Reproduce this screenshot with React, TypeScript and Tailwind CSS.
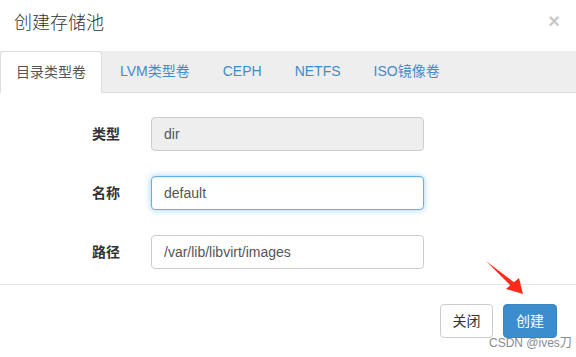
import React, { useState } from 'react';

const tabs = ['目录类型卷', 'LVM类型卷', 'CEPH', 'NETFS', 'ISO镜像卷'];

const App = () => {
  const [active, setActive] = useState(0);
  const [name, setName] = useState('default');
  const [path, setPath] = useState('/var/lib/libvirt/images');

  return (
    <div
      className="relative w-[576px] h-[357px] bg-white text-[#333] overflow-hidden"
      style={{ fontFamily: '"Liberation Sans", "Noto Sans CJK SC", sans-serif' }}
    >
      {/* header */}
      <div className="flex items-center justify-between h-[51px] pl-[14px] pr-[16px]">
        <h4 className="text-[18px] font-light text-[#333] leading-none -mt-[6px]">创建存储池</h4>
        <button className="text-[20px] font-bold text-[#c8c8c8] leading-none -mt-[10px]">×</button>
      </div>

      {/* tabs */}
      <div className="flex h-[42px] bg-[#eeeeee] border-b border-[#dddddd]">
        {tabs.map((t, i) => (
          <button
            key={t}
            onClick={() => setActive(i)}
            className={
              i === active
                ? 'px-[15px] h-[42px] text-[14px] text-[#555] bg-white border border-[#dddddd] border-b-white rounded-t-[4px] -mb-px mr-[2px]'
                : 'px-[16px] h-[41px] text-[14px] text-[#428bca] mr-[1px]'
            }
          >
            {t}
          </button>
        ))}
      </div>

      {/* form */}
      <div className="flex flex-col gap-[25px] pt-[24px] pl-[92px] pr-[152px]">
        <div className="flex items-center">
          <label className="w-[59px] text-[14px] font-bold">类型</label>
          <input
            value="dir"
            disabled
            readOnly
            className="flex-1 h-[34px] px-[12px] text-[14px] text-[#555] bg-[#eeeeee] border border-[#cccccc] rounded-[4px]"
          />
        </div>
        <div className="flex items-center">
          <label className="w-[59px] text-[14px] font-bold">名称</label>
          <input
            value={name}
            onChange={(e) => setName(e.target.value)}
            className="flex-1 h-[34px] px-[12px] text-[14px] text-[#555] bg-white border border-[#66afe9] rounded-[4px] outline-none shadow-[inset_0_1px_1px_rgba(0,0,0,0.075),0_0_6px_rgba(102,175,233,0.6)]"
          />
        </div>
        <div className="flex items-center">
          <label className="w-[59px] text-[14px] font-bold">路径</label>
          <input
            value={path}
            onChange={(e) => setPath(e.target.value)}
            className="flex-1 h-[34px] px-[12px] text-[14px] text-[#555] bg-white border border-[#cccccc] rounded-[4px] outline-none"
          />
        </div>
      </div>

      {/* footer */}
      <div className="mt-[15px] border-t border-[#e5e5e5] flex justify-end gap-[10px] pt-[19px] pr-[19px]">
        <button className="h-[34px] w-[53px] text-[14px] text-[#333] bg-white border border-[#cccccc] rounded-[4px]">
          关闭
        </button>
        <button className="h-[34px] w-[54px] text-[14px] text-white bg-[#3c8dcd] border border-[#3a85c0] rounded-[4px]">
          创建
        </button>
      </div>

      {/* annotation arrow */}
      <svg className="absolute left-[485px] top-[259px]" width="44" height="40" viewBox="0 0 44 40">
        <path d="M1 2 L30 24 L27 28 Z" fill="#ff2a1a" />
        <path d="M38 35 L21 30 L34 19 Z" fill="#ff2a1a" />
      </svg>

      {/* watermark */}
      <div className="absolute left-[489px] top-[337px] whitespace-nowrap text-[12px] text-[#8a8a8a] leading-none">
        CSDN @ives刀
      </div>
    </div>
  );
};

export default App;
